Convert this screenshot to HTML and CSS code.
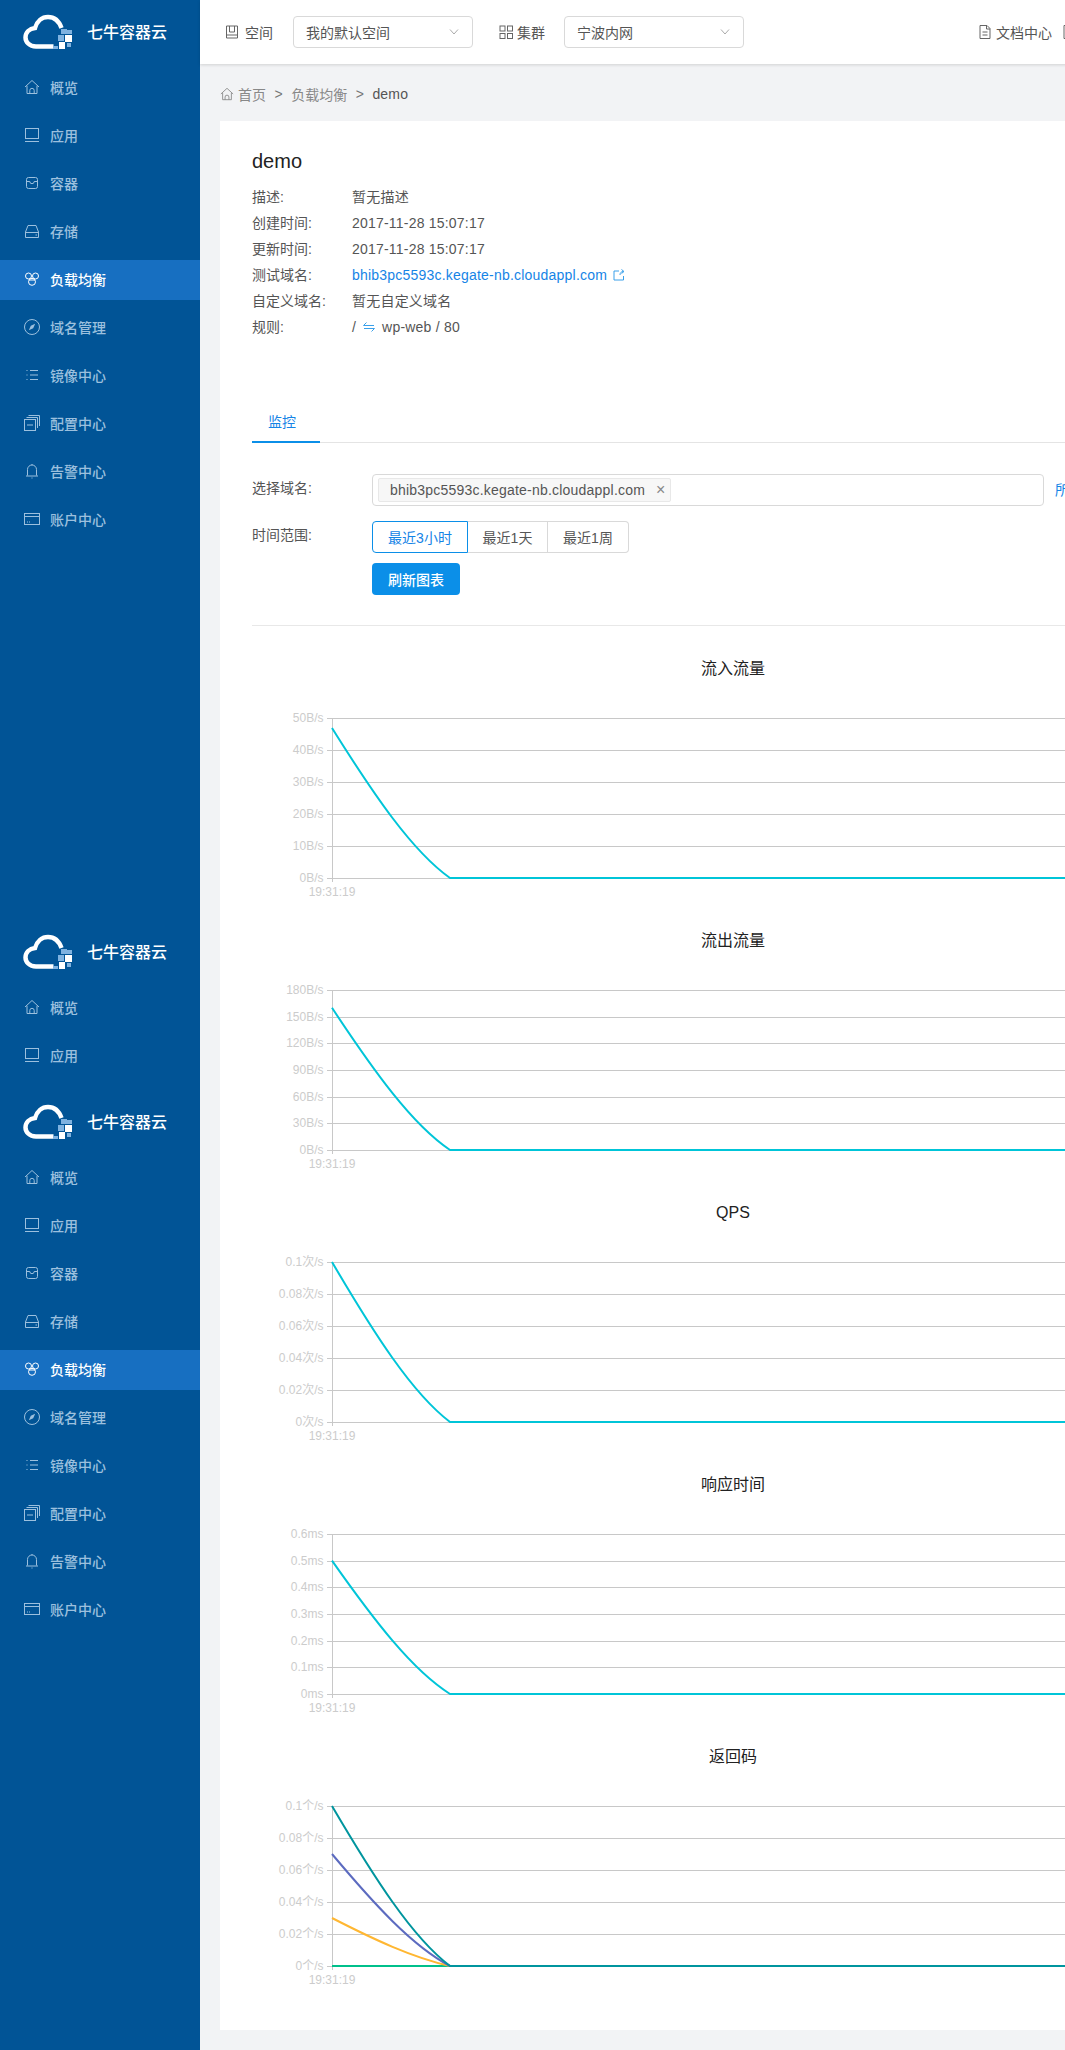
FILE: index.html
```html
<!DOCTYPE html>
<html lang="zh">
<head>
<meta charset="utf-8">
<title>负载均衡 demo</title>
<link rel="stylesheet" href="styles.css">
</head>
<body>
<svg class="defs" width="0" height="0" aria-hidden="true">
  <symbol id="i-logo" viewBox="0 0 52 36">
    <path d="M30.5 32.5H13C6 32.5 2.5 27.500 2.500 23.500C2.500 18.500 6.500 14.700 12 14C14 7 19 3 25 3C31 3 36 7 38.500 14" fill="none" stroke="#fff" stroke-width="4.500"/>
    <rect x="38" y="15" width="6" height="5" fill="#7fb2e0"/>
    <rect x="44" y="16" width="5" height="4" fill="#7fb2e0"/>
    <rect x="35" y="21" width="6" height="6" fill="#7fb2e0"/>
    <rect x="42" y="21" width="7" height="7" fill="#fff"/>
    <rect x="36" y="28" width="6" height="7" fill="#fff"/>
    <rect x="44" y="29" width="4" height="4" fill="#7fb2e0"/>
    <rect x="30" y="32" width="5" height="3" fill="#7fb2e0"/>
  </symbol>
  <symbol id="i-home" viewBox="0 0 16 16"><path d="M1 8L8 1.500L15 8M3 6.800V14.500H13V6.800M5.800 14.500V11.500A2.200 2.200 0 0 1 10.200 11.500V14.500"/></symbol>
  <symbol id="i-laptop" viewBox="0 0 16 16"><rect x="1.500" y="1.500" width="13" height="10"/><path d="M1 14.500H15"/></symbol>
  <symbol id="i-box" viewBox="0 0 16 16"><rect x="2.500" y="2.500" width="11" height="11" rx="2"/><path d="M2.500 6.500H5.800A2.200 2.200 0 0 0 10.200 6.500H13.500"/></symbol>
  <symbol id="i-disk" viewBox="0 0 16 16"><path d="M4 2.500H12L14.500 9V14.500H1.500V9ZM1.500 9.500H14.500M11.500 12H13"/></symbol>
  <symbol id="i-lb" viewBox="0 0 16 16"><circle cx="4.500" cy="5" r="3"/><circle cx="11.500" cy="5" r="3"/><circle cx="8" cy="10.800" r="3.500"/><path d="M5 9H11"/></symbol>
  <symbol id="i-compass" viewBox="0 0 16 16"><circle cx="8" cy="8" r="7.500"/><path d="M11.200 4.800L9.200 9.200L4.800 11.200L6.800 6.800Z" fill="currentColor" stroke="none"/></symbol>
  <symbol id="i-list" viewBox="0 0 16 16"><path d="M2.500 3.500H3.500M2.500 8H3.500M2.500 12.500H3.500M6 3.500H14M6 8H14M6 12.500H14"/></symbol>
  <symbol id="i-copies" viewBox="0 0 16 16"><rect x="0.500" y="4.500" width="11" height="11"/><path d="M2.500 2.500H13.500V13M4.500 0.500H15.500V11M3 10H9"/></symbol>
  <symbol id="i-bell" viewBox="0 0 16 16"><path d="M3.500 12.500V6.500A4.500 4.500 0 0 1 12.500 6.500V12.500M2 13H14M7.500 15H8.500M8 1V2"/></symbol>
  <symbol id="i-card" viewBox="0 0 16 16"><rect x="0.500" y="2.500" width="15" height="11"/><path d="M0.500 5.500H15.500M3 11H4M5 11H6"/></symbol>
  <symbol id="i-space" viewBox="0 0 16 16"><path d="M2.500 2H13.500V14H2.500ZM5.500 2V8H10.500V2M2.500 11H13.500"/></symbol>
  <symbol id="i-grid" viewBox="0 0 16 16"><rect x="2" y="2" width="5" height="5"/><rect x="9.500" y="2" width="5" height="5"/><rect x="2" y="9.500" width="5" height="5"/><rect x="9.500" y="9.500" width="5" height="5"/></symbol>
  <symbol id="i-doc" viewBox="0 0 16 16"><path d="M3 1.500H10L13 4.500V14.500H3ZM9.500 1.500V5H13M5.500 8H10.500M5.500 11H10.500"/></symbol>
  <symbol id="i-chev" viewBox="0 0 10 6"><path d="M1 0.500L5 5L9 0.500"/></symbol>
  <symbol id="i-swap" viewBox="0 0 12 10"><path d="M0.500 3.500H11M0.500 3.500L3.500 0.500M11.500 6.500H1M11.500 6.500L8.500 9.500"/></symbol>
  <symbol id="i-ext" viewBox="0 0 12 12"><path d="M6 2H1V11H10.500V7M7 6C7 4 8 2.500 10.500 2.500M8.500 0.500L11 2.500L8.500 4.500"/></symbol>
</svg>

<div class="app">
  <aside class="sidebar">
    <div class="stack stack-first">
      <div class="brand"><svg class="brand-logo"><use href="#i-logo"/></svg><span class="brand-name">七牛容器云</span></div>
      <nav class="nav">
        <a class="nav-item"><svg class="icon"><use href="#i-home"/></svg>概览</a>
        <a class="nav-item"><svg class="icon"><use href="#i-laptop"/></svg>应用</a>
        <a class="nav-item"><svg class="icon"><use href="#i-box"/></svg>容器</a>
        <a class="nav-item"><svg class="icon"><use href="#i-disk"/></svg>存储</a>
        <a class="nav-item active"><svg class="icon"><use href="#i-lb"/></svg>负载均衡</a>
        <a class="nav-item"><svg class="icon"><use href="#i-compass"/></svg>域名管理</a>
        <a class="nav-item"><svg class="icon"><use href="#i-list"/></svg>镜像中心</a>
        <a class="nav-item"><svg class="icon"><use href="#i-copies"/></svg>配置中心</a>
        <a class="nav-item"><svg class="icon"><use href="#i-bell"/></svg>告警中心</a>
        <a class="nav-item"><svg class="icon"><use href="#i-card"/></svg>账户中心</a>
      </nav>
    </div>
    <div class="stack stack-second">
      <div class="brand"><svg class="brand-logo"><use href="#i-logo"/></svg><span class="brand-name">七牛容器云</span></div>
      <nav class="nav">
        <a class="nav-item"><svg class="icon"><use href="#i-home"/></svg>概览</a>
        <a class="nav-item"><svg class="icon"><use href="#i-laptop"/></svg>应用</a>
      </nav>
    </div>
    <div class="stack">
      <div class="brand"><svg class="brand-logo"><use href="#i-logo"/></svg><span class="brand-name">七牛容器云</span></div>
      <nav class="nav">
        <a class="nav-item"><svg class="icon"><use href="#i-home"/></svg>概览</a>
        <a class="nav-item"><svg class="icon"><use href="#i-laptop"/></svg>应用</a>
        <a class="nav-item"><svg class="icon"><use href="#i-box"/></svg>容器</a>
        <a class="nav-item"><svg class="icon"><use href="#i-disk"/></svg>存储</a>
        <a class="nav-item active"><svg class="icon"><use href="#i-lb"/></svg>负载均衡</a>
        <a class="nav-item"><svg class="icon"><use href="#i-compass"/></svg>域名管理</a>
        <a class="nav-item"><svg class="icon"><use href="#i-list"/></svg>镜像中心</a>
        <a class="nav-item"><svg class="icon"><use href="#i-copies"/></svg>配置中心</a>
        <a class="nav-item"><svg class="icon"><use href="#i-bell"/></svg>告警中心</a>
        <a class="nav-item"><svg class="icon"><use href="#i-card"/></svg>账户中心</a>
      </nav>
    </div>
  </aside>

  <main class="main">
    <header class="topbar">
      <span class="top-label"><svg class="top-icon"><use href="#i-space"/></svg>空间</span>
      <div class="select select-space"><span>我的默认空间</span><svg class="chev"><use href="#i-chev"/></svg></div>
      <span class="top-label top-label-cluster"><svg class="top-icon"><use href="#i-grid"/></svg>集群</span>
      <div class="select select-cluster"><span>宁波内网</span><svg class="chev"><use href="#i-chev"/></svg></div>
      <span class="top-label top-label-doc"><svg class="top-icon"><use href="#i-doc"/></svg>文档中心</span>
      <span class="top-next"><svg class="top-icon"><use href="#i-doc"/></svg></span>
    </header>

    <div class="crumbs">
      <svg class="crumb-icon"><use href="#i-home"/></svg>
      <span>首页</span><span class="crumb-sep">&gt;</span><span>负载均衡</span><span class="crumb-sep">&gt;</span><span class="crumb-current">demo</span>
    </div>

    <section class="card">
      <h1 class="title">demo</h1>
      <dl class="meta">
        <dt>描述:</dt><dd>暂无描述</dd>
        <dt>创建时间:</dt><dd>2017-11-28 15:07:17</dd>
        <dt>更新时间:</dt><dd>2017-11-28 15:07:17</dd>
        <dt>测试域名:</dt><dd><a class="link">bhib3pc5593c.kegate-nb.cloudappl.com</a><svg class="ext"><use href="#i-ext"/></svg></dd>
        <dt>自定义域名:</dt><dd>暂无自定义域名</dd>
        <dt>规则:</dt><dd class="rule">/<svg class="swap"><use href="#i-swap"/></svg>wp-web / 80</dd>
      </dl>

      <div class="tabs"><span class="tab">监控</span></div>

      <div class="form-row form-row-domain">
        <label class="form-label">选择域名:</label>
        <div class="tag-input"><span class="tag">bhib3pc5593c.kegate-nb.cloudappl.com<span class="tag-close">×</span></span></div>
        <a class="link all-link">所有域名</a>
      </div>
      <div class="form-row form-row-range">
        <label class="form-label">时间范围:</label>
        <div class="btn-group">
          <span class="seg seg-active">最近3小时</span><span class="seg seg-day">最近1天</span><span class="seg seg-week">最近1周</span>
        </div>
      </div>
      <button class="refresh">刷新图表</button>
      <hr class="divider">

      <div class="chart">
        <h2 class="chart-title">流入流量</h2>
        <svg class="plot" viewBox="0 0 962 248">
          <path class="grid" d="M75 39.500H962M75 71.500H962M75 103.500H962M75 135.500H962M75 167.500H962M75 199.500H962M80.500 39V199M80.500 199V203"/>
          <text class="ylab" x="71.500" y="43">50B/s</text><text class="ylab" x="71.500" y="75">40B/s</text><text class="ylab" x="71.500" y="107">30B/s</text><text class="ylab" x="71.500" y="139">20B/s</text><text class="ylab" x="71.500" y="171">10B/s</text><text class="ylab" x="71.500" y="203">0B/s</text>
          <text class="xlab" x="80" y="217">19:31:19</text>
          <path class="line line-cyan" d="M80 49C122 116 160 172 198 199H962"/>
        </svg>
      </div>

      <div class="chart">
        <h2 class="chart-title">流出流量</h2>
        <svg class="plot" viewBox="0 0 962 248">
          <path class="grid" d="M75 39.500H962M75 66.500H962M75 92.500H962M75 119.500H962M75 146.500H962M75 172.500H962M75 199.500H962M80.500 39V199M80.500 199V203"/>
          <text class="ylab" x="71.500" y="43">180B/s</text><text class="ylab" x="71.500" y="70">150B/s</text><text class="ylab" x="71.500" y="96">120B/s</text><text class="ylab" x="71.500" y="123">90B/s</text><text class="ylab" x="71.500" y="150">60B/s</text><text class="ylab" x="71.500" y="176">30B/s</text><text class="ylab" x="71.500" y="203">0B/s</text>
          <text class="xlab" x="80" y="217">19:31:19</text>
          <path class="line line-cyan" d="M80 56.800C122 120.400 160 173.400 198 199H962"/>
        </svg>
      </div>

      <div class="chart">
        <h2 class="chart-title">QPS</h2>
        <svg class="plot" viewBox="0 0 962 248">
          <path class="grid" d="M75 39.500H962M75 71.500H962M75 103.500H962M75 135.500H962M75 167.500H962M75 199.500H962M80.500 39V199M80.500 199V203"/>
          <text class="ylab" x="71.500" y="43">0.1次/s</text><text class="ylab" x="71.500" y="75">0.08次/s</text><text class="ylab" x="71.500" y="107">0.06次/s</text><text class="ylab" x="71.500" y="139">0.04次/s</text><text class="ylab" x="71.500" y="171">0.02次/s</text><text class="ylab" x="71.500" y="203">0次/s</text>
          <text class="xlab" x="80" y="217">19:31:19</text>
          <path class="line line-cyan" d="M80 39C122 110.500 160 170.200 198 199H962"/>
        </svg>
      </div>

      <div class="chart">
        <h2 class="chart-title">响应时间</h2>
        <svg class="plot" viewBox="0 0 962 248">
          <path class="grid" d="M75 39.500H962M75 66.500H962M75 92.500H962M75 119.500H962M75 146.500H962M75 172.500H962M75 199.500H962M80.500 39V199M80.500 199V203"/>
          <text class="ylab" x="71.500" y="43">0.6ms</text><text class="ylab" x="71.500" y="70">0.5ms</text><text class="ylab" x="71.500" y="96">0.4ms</text><text class="ylab" x="71.500" y="123">0.3ms</text><text class="ylab" x="71.500" y="150">0.2ms</text><text class="ylab" x="71.500" y="176">0.1ms</text><text class="ylab" x="71.500" y="203">0ms</text>
          <text class="xlab" x="80" y="217">19:31:19</text>
          <path class="line line-cyan" d="M80 65.700C122 125.300 160 175 198 199H962"/>
        </svg>
      </div>

      <div class="chart">
        <h2 class="chart-title">返回码</h2>
        <svg class="plot" viewBox="0 0 962 248">
          <path class="grid" d="M75 39.500H962M75 71.500H962M75 103.500H962M75 135.500H962M75 167.500H962M75 199.500H962M80.500 39V199M80.500 199V203"/>
          <text class="ylab" x="71.500" y="43">0.1个/s</text><text class="ylab" x="71.500" y="75">0.08个/s</text><text class="ylab" x="71.500" y="107">0.06个/s</text><text class="ylab" x="71.500" y="139">0.04个/s</text><text class="ylab" x="71.500" y="171">0.02个/s</text><text class="ylab" x="71.500" y="203">0个/s</text>
          <text class="xlab" x="80" y="217">19:31:19</text>
          <path class="line line-green" d="M80 199H198"/>
          <path class="line line-amber" d="M80 151C122 172.500 160 190.400 198 199"/>
          <path class="line line-indigo" d="M80 87C122 137 160 178.800 198 199"/>
          <path class="line line-teal" d="M80 39C122 110.500 160 170.200 198 199H962"/>
        </svg>
      </div>
    </section>
  </main>
</div>
</body>
</html>
```

FILE: styles.css
```css
* { box-sizing: border-box; }
html, body { margin: 0; padding: 0; overflow: hidden; }
body {
  font-family: "Liberation Sans", "Noto Sans CJK SC", sans-serif;
  font-size: 14px;
  color: #555;
  background: #f2f3f5;
}
.defs { position: absolute; }
.app { display: flex; width: 1266px; height: 2050px; }

/* sidebar */
.sidebar { flex: 0 0 200px; background: #015496; height: 2050px; overflow: hidden; }
.stack-first { height: 920px; }
.stack-second { height: 170px; overflow: hidden; }
.brand { display: flex; align-items: center; height: 64px; padding-left: 23px; }
.brand-logo { width: 52px; height: 36px; flex: none; }
.brand-name { margin: 0 0 2px 12px; color: #fff; font-size: 16px; font-weight: 500; }
.nav { display: flex; flex-direction: column; gap: 8px; padding-top: 4px; }
.nav-item {
  display: flex; align-items: center; gap: 10px;
  height: 40px; padding: 0 0 2px 24px;
  color: #9cc0de; font-weight: 500;
}
.nav-item.active { background: #176fc1; color: #fff; }
.icon { width: 16px; height: 16px; flex: none; fill: none; stroke: currentColor; stroke-width: 1; }

/* main column */
.main { flex: 1; min-width: 0; display: flex; flex-direction: column; }
.topbar {
  display: flex; align-items: center; height: 64px; flex: none;
  padding-left: 24px; background: #fff; box-shadow: 0 1px 3px rgba(0, 0, 0, .14);
  position: relative;
}
.top-label { display: flex; align-items: center; color: #555; gap: 5px; }
.top-icon { width: 16px; height: 16px; flex: none; fill: none; stroke: #666; stroke-width: 1; }
.select {
  display: flex; align-items: center; justify-content: space-between;
  width: 180px; height: 32px; padding: 0 13px 0 12px;
  border: 1px solid #d9d9d9; border-radius: 4px; color: #555;
}
.select-space { margin-left: 20px; }
.top-label-cluster { margin-left: 25px; gap: 3px; }
.select-cluster { margin-left: 19px; }
.top-label-doc { margin-left: 233px; gap: 3px; }
.top-next { margin-left: 9px; display: flex; }
.chev { width: 10px; height: 6px; fill: none; stroke: #aaa; stroke-width: 1; }

/* breadcrumb */
.crumbs { display: flex; align-items: center; height: 57px; padding: 3px 0 0 20px; color: #888; }
.crumb-icon { width: 14px; height: 14px; margin-right: 4px; fill: none; stroke: #888; stroke-width: 1; }
.crumb-sep { margin: 0 8.500px; color: #777; }
.crumb-current { color: #555; letter-spacing: .2px; }

/* card */
.card { width: 1026px; margin-left: 20px; padding: 26px 32px 15px; background: #fff; }
.title { margin: 0 0 9px; font-size: 20px; font-weight: 400; line-height: 28px; color: #222; }
.meta { display: grid; grid-template-columns: 100px 1fr; grid-auto-rows: 26px; margin: 0; line-height: 26px; }
.meta dt, .meta dd { margin: 0; }
.meta dd { letter-spacing: .21px; }
.link { color: #1584e6; }
.ext { width: 12px; height: 12px; margin-left: 6px; fill: none; stroke: #3aa0ea; stroke-width: 1; vertical-align: -1px; }
.swap { width: 12px; height: 10px; margin: 0 7px 0 7px; fill: none; stroke: #3aa0ea; stroke-width: 1; }

.tabs { margin: 59px 0 31px; height: 44px; border-bottom: 1px solid #e4e4e4; }
.tab {
  display: block; width: 68px; height: 44px; padding-left: 16px;
  line-height: 46px; color: #1584e6; border-bottom: 2px solid #0b8fe8;
}

.form-row { display: flex; }
.form-row-domain { margin-bottom: 15px; }
.form-row-range { margin-bottom: 10px; }
.form-label { flex: 0 0 120px; line-height: 28px; }
.tag-input {
  display: flex; align-items: center; flex: 0 0 672px; height: 32px; padding-left: 5px;
  border: 1px solid #d9d9d9; border-radius: 4px;
}
.tag {
  display: flex; align-items: center; height: 24px; padding: 0 5px 0 11px;
  background: #f7f7f7; border: 1px solid #e8e8e8; border-radius: 2px;
  letter-spacing: .21px;
}
.tag-close { margin-left: 11px; color: #888; font-size: 16px; letter-spacing: 0; }
.all-link { margin-left: 11px; line-height: 32px; white-space: nowrap; }

.btn-group { display: flex; height: 32px; }
.seg {
  display: flex; align-items: center; justify-content: center;
  width: 81px; border: 1px solid #d9d9d9; border-left-width: 0;
}
.seg-active { width: 96px; border: 1px solid #0b8fe8; color: #1584e6; border-radius: 4px 0 0 4px; }
.seg-day { width: 80px; }
.seg-week { border-radius: 0 4px 4px 0; }
.refresh {
  display: block; width: 88px; height: 32px; margin-left: 120px; padding: 0;
  border: 0; border-radius: 4px; background: #0b8fe8; color: #fff;
  font: 500 14px "Liberation Sans", "Noto Sans CJK SC", sans-serif;
}
.divider { height: 1px; margin: 30px 0 29px; border: 0; background: #e8e8e8; }

/* charts */
.chart { height: 272px; }
.chart-title { margin: 0; height: 24px; font-size: 16px; font-weight: 400; line-height: 28px; text-align: center; color: #222; }
.plot { display: block; width: 962px; height: 248px; }
.grid { fill: none; stroke: #c8c8c8; stroke-width: 1; }
.ylab, .xlab { font-size: 12px; fill: #ccc; }
.ylab { text-anchor: end; }
.xlab { text-anchor: middle; }
.line { fill: none; stroke-width: 2; }
.line-cyan { stroke: #00c5d8; }
.line-teal { stroke: #00959e; }
.line-indigo { stroke: #5c6bc0; }
.line-amber { stroke: #ffb732; }
.line-green { stroke: #00c08b; }
```
